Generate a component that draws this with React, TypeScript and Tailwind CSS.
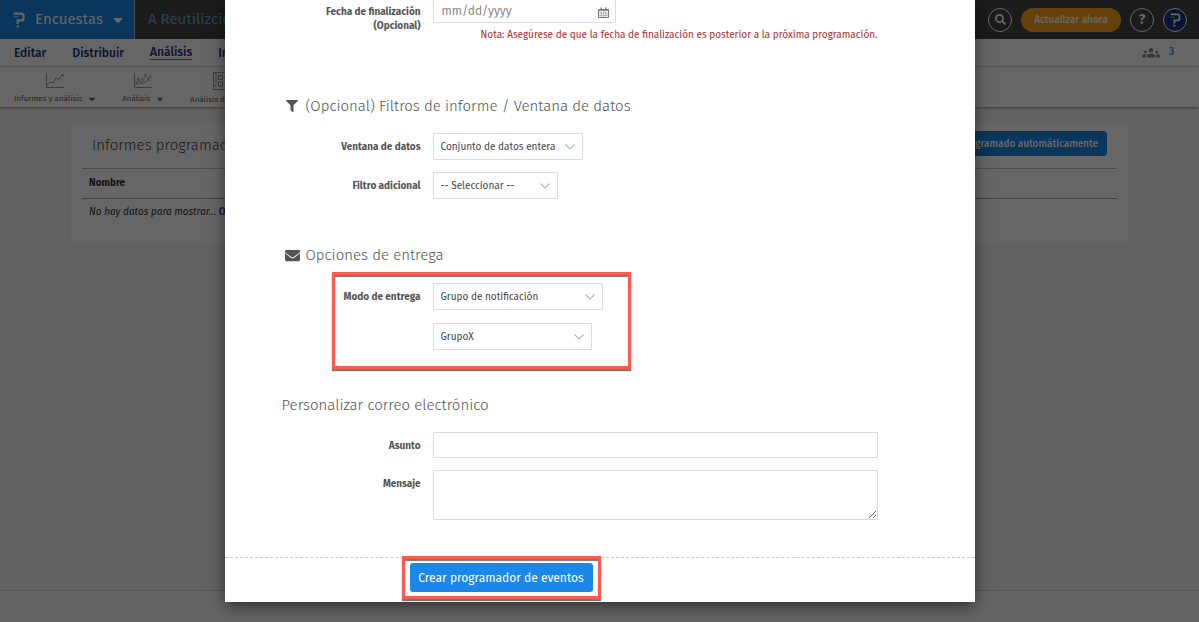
import type { ReactNode } from 'react'
import { FaCaretDown, FaEnvelope, FaFilter, FaSearch } from 'react-icons/fa'

interface SelectProps {
  id: string
  label?: string
  options: string[]
  width: string
}

const NAV = ['Editar', 'Distribuir', 'Análisis', 'Integración']

const TOOLS = [
  { label: 'Informes y análisis', icon: <LineChartIcon />, caret: true },
  { label: 'Análisis', icon: <MultiChartIcon />, caret: true },
  { label: 'Análisis de texto', icon: <ScrollIcon />, caret: false },
]

function LogoIcon({ className }: { className?: string }) {
  return (
    <svg viewBox="0 0 12 16" className={className} fill="none" stroke="currentColor" strokeWidth="2.200">
      <path d="M0.5 1.600H8.500a2 2 0 0 1 2 2v2.800a2 2 0 0 1-2 2H4.700V12" />
      <path d="M4.700 13.400v2.200" />
      <path d="M0.5 4.800h5" strokeWidth="0.7" />
    </svg>
  )
}

function LineChartIcon() {
  return (
    <svg viewBox="0 0 20 17" className="h-[17px] w-5 text-[#999]" fill="none" stroke="currentColor">
      <path d="M1.500 1v14.500H19" />
      <path d="M2 13l3-3 3 1 3-5 3 1.500 3-4.500 1.500-.5" />
      <path d="M16 2.500h2.500V5" strokeWidth=".7" />
    </svg>
  )
}

function MultiChartIcon() {
  return (
    <svg viewBox="0 0 20 17" className="h-[17px] w-5 text-[#999]" fill="none" stroke="currentColor" strokeWidth=".8">
      <path d="M1.500 1v14.500H19" strokeWidth="1" />
      <path d="M3 13l2.500-6 3.500 5 3.500-9 3 5.500 3-5" />
      <path d="M2.500 10l3.500 2 3-5.500 3.500 4.500 5.500-8.500" />
      <circle cx="5.500" cy="7" r="1" />
      <circle cx="12.500" cy="3" r="1" />
    </svg>
  )
}

function ScrollIcon() {
  return (
    <svg viewBox="0 0 20 18" className="h-[18px] w-5 text-[#999]" fill="none" stroke="currentColor">
      <path d="M6 .5h13v17H3.500V14H6V.5H3.500V14" />
      <path d="M8.500 3.500h4v4h-4zM8.500 10h4v4h-4zM14.500 4.500H17M14.500 6.500H17M14.500 11.500H17" />
    </svg>
  )
}

function CalendarIcon() {
  return (
    <svg viewBox="0 0 11 11" className="h-[11px] w-[11px]" fill="none" stroke="#777">
      <path d="M.5 2.500h10v8H.5z" />
      <path d="M.5 3h10" strokeWidth="1.500" />
      <path d="M.5 6h10M.5 8.300h10M3.200 4v6.500M5.500 4v6.500M7.800 4v6.500" strokeWidth=".5" />
      <path d="M3.200.5v2M7.800.5v2" strokeWidth="1.400" />
    </svg>
  )
}

function PeopleIcon() {
  return (
    <svg viewBox="0 0 18 10" className="h-[10px] w-[18px]" fill="currentColor">
      <circle cx="9" cy="2.300" r="2.200" />
      <circle cx="3.300" cy="4" r="1.300" />
      <circle cx="14.700" cy="4" r="1.300" />
      <path d="M5 9.500V7.500C5 5 13 5 13 7.500v2zM0 9.500V8c0-1.500 2.500-2 4-1.500V9.500zM18 9.500V8c0-1.500-2.500-2-4-1.500V9.500z" />
    </svg>
  )
}

function Select({ id, label, options, width }: SelectProps) {
  return (
    <div className={`relative ${width}`}>
      <select
        id={id}
        aria-label={label}
        className="block h-[27px] w-full appearance-none border border-[#dcdcdc] bg-white pl-[7px] pr-6 pt-px text-[10px] text-[#444]"
      >
        {options.map((o) => <option key={o}>{o}</option>)}
      </select>
      <svg viewBox="0 0 10 6" className="pointer-events-none absolute right-2 top-[11px] h-[6px] w-[10px]" fill="none" stroke="#a9bacb" strokeWidth="1.200">
        <path d="M.5.5L5 5 9.500.5" />
      </svg>
    </div>
  )
}

function Row({ label, htmlFor, children }: { label?: ReactNode; htmlFor?: string; children: ReactNode }) {
  return (
    <div className="grid grid-cols-[196px_1fr] gap-x-3">
      {label ? (
        <label htmlFor={htmlFor} className="pt-[7px] text-right text-[10px] font-bold leading-[14px] text-[#545454]">{label}</label>
      ) : <span />}
      <div>{children}</div>
    </div>
  )
}

function Background() {
  return (
    <div className="flex min-h-screen flex-col bg-[#f5f5f5]">
      <header className="flex h-[39px] items-stretch bg-[#444]">
        <div className="flex w-[135px] items-center border-r border-[#bbb] bg-[#1b87e6] pl-[13px] text-white">
          <LogoIcon className="h-4 w-3" />
          <span className="ml-[10px] text-[15px]">Encuestas</span>
          <FaCaretDown className="ml-[9px] h-4 w-3" />
        </div>
        <span className="self-center pl-[13px] text-[15px] text-[#5fa9c4]">A Reutilizción</span>
        <div className="ml-auto flex items-center gap-[9px] pr-3 text-white">
          <input aria-label="Buscar" className="h-5 w-28 border border-white" />
          <button aria-label="Buscar encuesta" className="ml-1 flex h-6 w-6 items-center justify-center rounded-full border border-white">
            <FaSearch className="h-[11px] w-[11px]" />
          </button>
          <button className="h-6 w-[100px] rounded-full bg-[#ffa01c] pt-px text-[10px] font-medium">Actualizar ahora</button>
          <button className="h-6 w-6 rounded-full border border-white text-sm font-bold leading-5">?</button>
          <button aria-label="Cuenta" className="flex h-6 w-6 items-center justify-center rounded-full border border-white bg-[#1b3380]">
            <LogoIcon className="h-[14px] w-[11px]" />
          </button>
        </div>
      </header>

      <nav className="flex h-7 items-center gap-[26px] border-b border-[#e0e0e0] bg-white px-[14px] text-xs font-medium text-[#1b3380]">
        {NAV.map((n) => (
          <a key={n} href="#" className={n === 'Análisis' ? 'border-b border-[#1b87e6] leading-[14px]' : 'leading-[14px]'}>{n}</a>
        ))}
        <span className="ml-auto flex items-center gap-[9px] pr-[11px] pt-px text-[#888]">
          <PeopleIcon />
          <span className="text-[10px] text-[#1b87e6]">3</span>
        </span>
      </nav>

      <div className="flex h-10 gap-[26px] bg-white px-[14px] pt-[5px] text-[8px] text-[#666] shadow-[0_1px_3px_rgba(0,0,0,0.4)]">
        {TOOLS.map((t) => (
          <a key={t.label} href="#" className="flex flex-col items-center gap-[3px] whitespace-nowrap">
            {t.icon}
            <span className="flex items-center gap-1.5 leading-[14px]">
              {t.label}
              {t.caret && <FaCaretDown className="h-[10px] w-2" />}
            </span>
          </a>
        ))}
      </div>

      <main className="mx-[71px] mt-4 flex-1">
        <div className="h-[120px] bg-white px-[11px]">
          <div className="flex h-[46px] items-center justify-between border-b border-[#bbb] pl-[10px] pr-[10px]">
            <h1 className="text-[15px] font-light text-[#444]">Informes programados</h1>
            <button className="-mt-1 h-[25px] rounded-sm bg-[#1b87e6] px-[9px] pt-px text-[10px] font-medium text-white">Crear informe programado automáticamente</button>
          </div>
          <table className="w-full text-left text-[10px] text-[#333]">
            <thead>
              <tr className="h-[29px] border-b border-[#aaa]"><th className="pl-[7px] font-bold">Nombre</th></tr>
            </thead>
            <tbody>
              <tr className="h-[29px]">
                <td className="pl-[7px] italic">No hay datos para mostrar... <a href="#" className="font-medium not-italic text-[#1b3380]">Obtener</a></td>
              </tr>
            </tbody>
          </table>
        </div>
      </main>
      <footer className="h-8 border-t border-[#ddd] bg-[#fcfcfc]" />
    </div>
  )
}

export default function App() {
  return (
    <div className="relative min-h-screen overflow-hidden font-['Fira_Sans',Roboto,sans-serif]">
      <Background />
      <div className="absolute inset-0 bg-black/60" />

      {/* Scheduler dialog, scrolled down to its last sections */}
      <div className="absolute inset-x-0 top-0 flex justify-center">
        <form role="dialog" aria-label="Programador" className="w-full max-w-[750px] bg-white shadow-[0_5px_15px_rgba(0,0,0,0.5)]">
          <div className="pr-[97px]">
            <div className="grid grid-cols-[196px_1fr] gap-x-3">
              <label htmlFor="end" className="pt-[5px] text-right text-[10px] font-bold leading-[14px] text-[#545454]">Fecha de finalización<br />(Opcional)</label>
              <div>
                <div className="relative w-[183px]">
                  <input id="end" placeholder="mm/dd/yyyy" className="block h-[23px] w-full border border-t-0 border-[#dcdcdc] px-2 text-xs placeholder:text-[#888]" />
                  <span className="absolute right-[7px] top-[7px]"><CalendarIcon /></span>
                </div>
                <p className="pt-[5px] text-right text-[10px] leading-[14px] text-[#b02a2a]">Nota: Asegúrese de que la fecha de finalización es posterior a la próxima programación.</p>
              </div>
            </div>

            <h2 className="mt-[52px] flex h-6 items-center gap-2 pl-[61px] text-[15px] font-light text-[#545454]">
              <FaFilter className="h-3 w-3" />
              (Opcional) Filtros de informe / Ventana de datos
            </h2>
            <div className="mt-[15px] flex flex-col gap-3">
              <Row label="Ventana de datos" htmlFor="window">
                <Select id="window" options={['Conjunto de datos entera']} width="w-[150px]" />
              </Row>
              <Row label="Filtro adicional" htmlFor="filter">
                <Select id="filter" options={['-- Seleccionar --']} width="w-[125px]" />
              </Row>
            </div>

            <h2 className="mt-11 flex h-6 items-center gap-[6px] pl-[60px] text-[15px] font-light text-[#545454]">
              <FaEnvelope className="h-[15px] w-[15px]" />
              Opciones de entrega
            </h2>
            <div className="relative mt-4 flex flex-col gap-[13px]">
              <Row label="Modo de entrega" htmlFor="mode">
                <Select id="mode" options={['Grupo de notificación']} width="w-[170px]" />
              </Row>
              <Row>
                <Select id="group" label="Grupo" options={['GrupoX']} width="w-[159px]" />
              </Row>
              <div className="pointer-events-none absolute -bottom-[19px] -top-[11px] left-[107px] w-[299px] border-3 border-[#fb5c50] shadow-[0_2px_1px_#777,inset_0_2px_1px_#777]" />
            </div>

            <h2 className="mt-[43px] flex h-6 items-center pl-[57px] text-[15px] font-light text-[#545454]">Personalizar correo electrónico</h2>
            <div className="mt-[15px] flex flex-col gap-3">
              <Row label="Asunto" htmlFor="subject">
                <input id="subject" className="block h-[26px] w-full border border-[#dcdcdc] px-2 text-[10px]" />
              </Row>
              <Row label="Mensaje" htmlFor="message">
                <textarea id="message" className="block h-[50px] w-full resize border border-[#dcdcdc] px-2 text-[10px]" />
              </Row>
            </div>
          </div>

          <div className="mt-[37px] flex border-t border-dashed border-[#ccc] pb-[10px] pl-[185px] pt-[5px]">
            <div className="relative">
              <button type="button" className="block h-[29px] w-[183px] rounded-[3px] bg-[#1b87e6] text-xs text-white">Crear programador de eventos</button>
              <div className="pointer-events-none absolute -inset-x-2 -bottom-[7px] -top-[7px] border-3 border-[#fb5c50] shadow-[0_2px_1px_#777,inset_0_2px_1px_#777]" />
            </div>
          </div>
        </form>
      </div>
    </div>
  )
}
